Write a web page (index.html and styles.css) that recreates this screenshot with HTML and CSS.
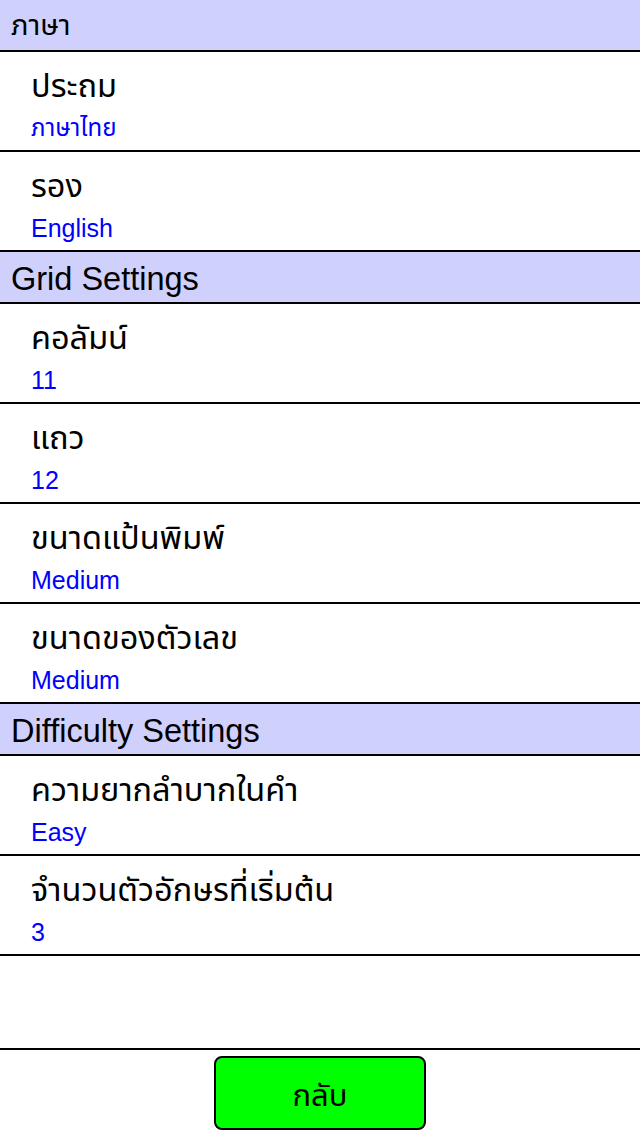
FILE: index.html
```html
<!DOCTYPE html>
<html lang="th">
<head>
<meta charset="utf-8">
<title>Settings</title>
<link rel="stylesheet" href="styles.css">
</head>
<body>
<div class="page">
  <div class="list">
    <div class="section section-th">ภาษา</div>
    <div class="row"><div class="title">ประถม</div><div class="value value-th">ภาษาไทย</div></div>
    <div class="row"><div class="title">รอง</div><div class="value">English</div></div>
    <div class="section">Grid Settings</div>
    <div class="row"><div class="title">คอลัมน์</div><div class="value">11</div></div>
    <div class="row"><div class="title">แถว</div><div class="value">12</div></div>
    <div class="row"><div class="title">ขนาดแป้นพิมพ์</div><div class="value">Medium</div></div>
    <div class="row"><div class="title">ขนาดของตัวเลข</div><div class="value">Medium</div></div>
    <div class="section">Difficulty Settings</div>
    <div class="row"><div class="title">ความยากลำบากในคำ</div><div class="value">Easy</div></div>
    <div class="row"><div class="title">จำนวนตัวอักษรที่เริ่มต้น</div><div class="value">3</div></div>
  </div>
  <div class="spacer"></div>
  <div class="footer">
    <button class="back">กลับ</button>
  </div>
</div>
</body>
</html>
```
FILE: styles.css
```css
* { box-sizing: border-box; }
html, body { margin: 0; padding: 0; }
body {
  font-family: "Liberation Sans", "Noto Sans Thai", "Noto Sans", sans-serif;
  background: #fff;
  color: #000;
}
.page {
  width: 640px;
  height: 1136px;
  display: flex;
  flex-direction: column;
}
.list { display: flex; flex-direction: column; }
.section {
  height: 52px;
  background: #d0d0fc;
  border-bottom: 2px solid #000;
  font-size: 32.5px;
  line-height: 55px;
  padding-left: 11px;
  overflow: hidden;
}
.section-th {
  font-size: 29px;
  line-height: 50px;
}
.row {
  height: 100px;
  border-bottom: 2px solid #000;
  padding-left: 31px;
  display: flex;
  flex-direction: column;
}
.title {
  font-size: 32.5px;
  line-height: 34px;
  margin-top: 17px;
}
.value {
  font-size: 25px;
  line-height: 28px;
  margin-top: 11px;
  color: #0000ff;
}
.value-th { font-size: 24px; }
.spacer { flex: 1; }
.footer {
  height: 88px;
  border-top: 2px solid #000;
  display: flex;
  justify-content: center;
  padding-top: 6px;
}
.back {
  width: 212px;
  height: 74px;
  background: #00ff00;
  border: 2px solid #000;
  border-radius: 8px;
  font-family: inherit;
  font-size: 31px;
  line-height: 76px;
  color: #000;
  padding: 0;
}
```
